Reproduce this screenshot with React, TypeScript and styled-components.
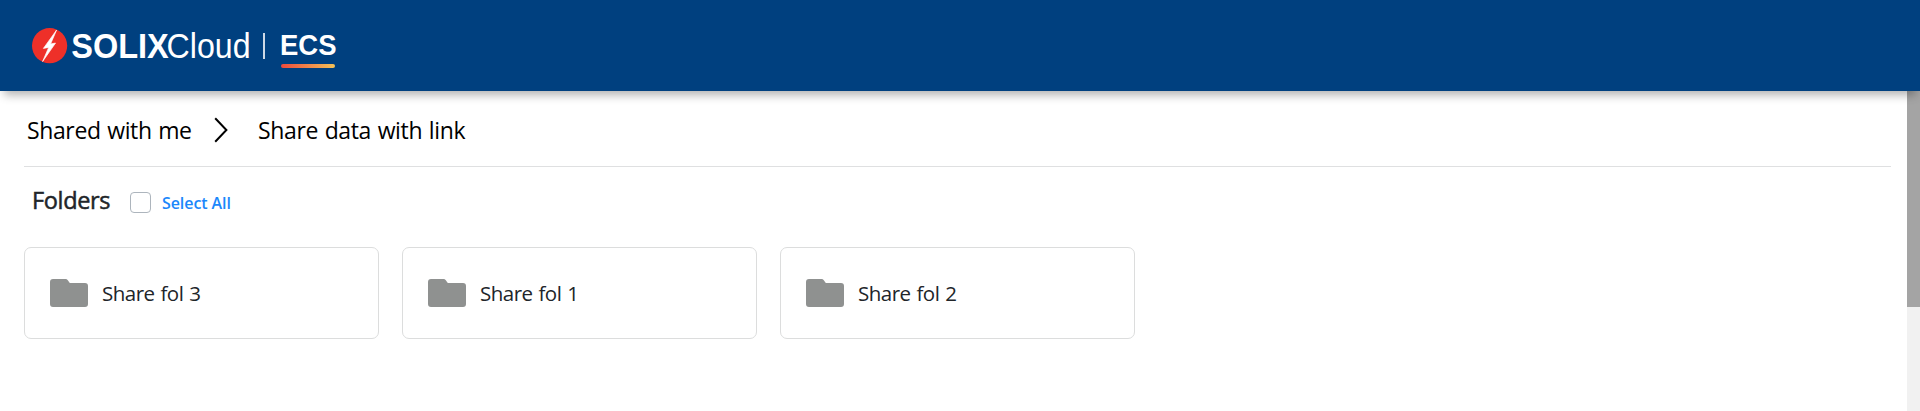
import React from 'react';
import styled, { createGlobalStyle } from 'styled-components';

const GlobalStyle = createGlobalStyle`
  *, *::before, *::after { box-sizing: border-box; }
  html, body { margin: 0; padding: 0; background: #fff; overflow: hidden; }
  body { font-family: 'Open Sans', 'Noto Sans', sans-serif; color: #212529; }
`;

const Page = styled.div`
  height: 411px;
  display: flex;
  flex-direction: column;
  overflow: hidden;
`;

const Header = styled.header`
  position: relative;
  z-index: 1;
  flex: none;
  height: 91px;
  padding: 22px 30px 0;
  background: #00407f;
  box-shadow: 0 8px 9px -4px rgba(0, 0, 0, 0.3);
`;

const Logo = styled.svg`
  display: block;
  font-family: 'Liberation Sans', Arial, sans-serif;
  fill: #fff;
`;

const Body = styled.div`
  flex: 1;
  display: flex;
  min-height: 0;
`;

const Content = styled.main`
  flex: 1;
  padding: 0 16px 0 24px;
`;

const Breadcrumb = styled.nav`
  display: flex;
  align-items: flex-start;
  height: 76px;
  padding: 22px 0 0 3px;
  border-bottom: 1px solid #dfe0e1;
`;

const Label = styled.span<{ $size: number; $weight?: number; $color?: string; $spacing?: number }>`
  font-size: ${(p) => p.$size}px;
  font-weight: ${(p) => p.$weight ?? 400};
  color: ${(p) => p.$color ?? '#212529'};
  letter-spacing: ${(p) => p.$spacing ?? 0}px;
  line-height: 34px;
  white-space: nowrap;
`;

const Crumb = styled(Label)`
  word-spacing: 1px;
`;

const ParentCrumb = styled(Crumb)`
  width: 187px;
`;

const Chevron = styled.svg`
  flex: none;
  margin: -5px 30px 0 0;
`;

const SectionHead = styled.div`
  display: flex;
  height: 80px;
  padding: 16px 0 0 8px;
`;

const Title = styled(Label)`
  width: 98px;
  -webkit-text-stroke: 0.5px #212529;
`;

const Checkbox = styled.input`
  appearance: none;
  flex: none;
  width: 21px;
  height: 21px;
  margin: 9px 11px 0 0;
  border: 1px solid #adb5bd;
  border-radius: 4px;
  background: #fff;
`;

const SelectAll = styled(Label)`
  margin-top: 3px;
`;

const Cards = styled.div`
  display: flex;
  gap: 23px;
`;

const Card = styled.div`
  display: flex;
  align-items: center;
  width: 355px;
  height: 92px;
  padding: 0 25px;
  border: 1px solid #dcdddd;
  border-radius: 7px;
`;

const FolderName = styled(Label)`
  word-spacing: 1px;
`;

const FolderIcon = styled.svg`
  flex: none;
  margin-right: 14px;
`;

const Track = styled.div`
  width: 13px;
  background: #f1f1f1;
`;

const Thumb = styled.div`
  height: 216px;
  background: #a4a4a4;
`;

const folders = ['Share fol 3', 'Share fol 1', 'Share fol 2'];

export default function App() {
  return (
    <Page>
      <GlobalStyle />
      <Header>
        <Logo width="310" height="50" viewBox="30 22 310 50">
          <defs>
            <linearGradient id="underline" x1="0" x2="1" y1="0" y2="0">
              <stop offset="0" stopColor="#ee4a3c" />
              <stop offset="1" stopColor="#f4c258" />
            </linearGradient>
          </defs>
          <circle cx="49.6" cy="45.7" r="17.6" fill="#ee3029" />
          <path
            d="M56.6 30 L43.4 48.4 L48.7 47.4 L42.6 61.5 L55.5 43.1 L50.6 43.9 Z"
            stroke="#fff"
            strokeWidth="0.7"
          />
          <text y="58" fontSize="35">
            <tspan x="71.3" fontWeight="700" textLength="97.5" lengthAdjust="spacingAndGlyphs">SOLIX</tspan>
            <tspan x="166.6" textLength="84" lengthAdjust="spacingAndGlyphs">Cloud</tspan>
          </text>
          <rect x="263.2" y="33" width="1.6" height="26" />
          <text x="280" y="54.5" fontSize="28.8" fontWeight="700" textLength="56.5" lengthAdjust="spacingAndGlyphs">ECS</text>
          <rect x="281" y="64" width="54" height="4" rx="2" fill="url(#underline)" />
        </Logo>
      </Header>
      <Body>
        <Content>
          <Breadcrumb>
            <ParentCrumb $size={23} $color="#000" $spacing={-0.38}>Shared with me</ParentCrumb>
            <Chevron width="14" height="36" viewBox="0 0 14 36" fill="none" stroke="#000" strokeWidth="2">
              <path d="M1.2 10.3 L12.4 22 L1.2 33.7" />
            </Chevron>
            <Crumb $size={23} $color="#000" $spacing={-0.36}>Share data with link</Crumb>
          </Breadcrumb>
          <SectionHead>
            <Title $size={23.5} $spacing={-0.35}>Folders</Title>
            <Checkbox type="checkbox" aria-label="Select All" />
            <SelectAll $size={16} $weight={600} $color="#1b87fb" $spacing={-0.08}>Select All</SelectAll>
          </SectionHead>
          <Cards>
            {folders.map((name) => (
              <Card key={name}>
                <FolderIcon width="38" height="28" viewBox="0 0 38 28" fill="#8f9190">
                  <path d="M3 0 H15.5 Q17 0 17.8 1.2 L19.8 4 H35 Q38 4 38 7 V25 Q38 28 35 28 H3 Q0 28 0 25 V3 Q0 0 3 0 Z" />
                </FolderIcon>
                <FolderName $size={20.5} $spacing={-0.5}>{name}</FolderName>
              </Card>
            ))}
          </Cards>
        </Content>
        <Track>
          <Thumb />
        </Track>
      </Body>
    </Page>
  );
}
